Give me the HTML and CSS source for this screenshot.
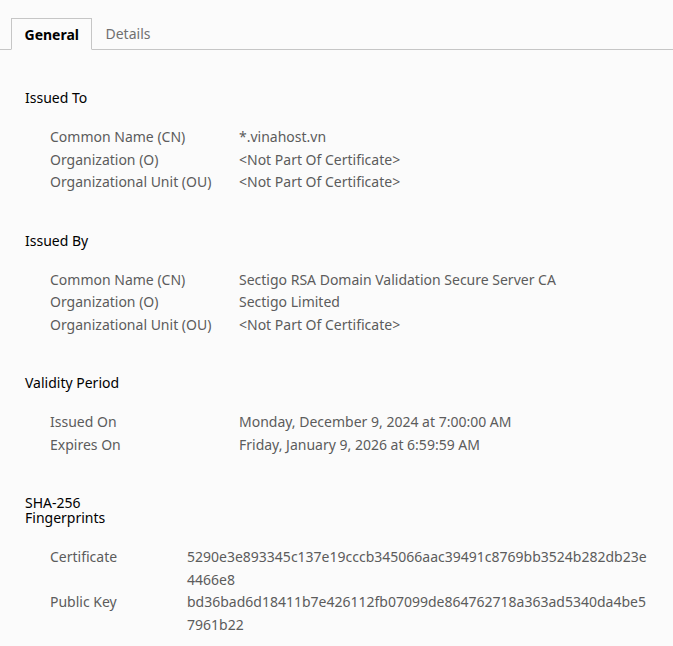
FILE: index.html
```html
<!DOCTYPE html>
<html>
<head>
<meta charset="utf-8">
<link rel="stylesheet" href="styles.css">
</head>
<body>
<div class="tabs">
  <div class="tab active">General</div>
  <div class="tab">Details</div>
</div>
<div class="content">
  <section class="section">
    <h2 class="heading">Issued To</h2>
    <div class="grid">
      <div class="label">Common Name (CN)</div><div class="value">*.vinahost.vn</div>
      <div class="label">Organization (O)</div><div class="value">&lt;Not Part Of Certificate&gt;</div>
      <div class="label">Organizational Unit (OU)</div><div class="value">&lt;Not Part Of Certificate&gt;</div>
    </div>
  </section>
  <section class="section">
    <h2 class="heading">Issued By</h2>
    <div class="grid">
      <div class="label">Common Name (CN)</div><div class="value">Sectigo RSA Domain Validation Secure Server CA</div>
      <div class="label">Organization (O)</div><div class="value">Sectigo Limited</div>
      <div class="label">Organizational Unit (OU)</div><div class="value">&lt;Not Part Of Certificate&gt;</div>
    </div>
  </section>
  <section class="section">
    <h2 class="heading">Validity Period</h2>
    <div class="grid">
      <div class="label">Issued On</div><div class="value">Monday, December 9, 2024 at 7:00:00 AM</div>
      <div class="label">Expires On</div><div class="value">Friday, January 9, 2026 at 6:59:59 AM</div>
    </div>
  </section>
  <section class="section">
    <h2 class="heading narrow">SHA-256 Fingerprints</h2>
    <div class="grid fp">
      <div class="label">Certificate</div><div class="value hash">5290e3e893345c137e19cccb345066aac39491c8769bb3524b282db23e4466e8</div>
      <div class="label">Public Key</div><div class="value hash">bd36bad6d18411b7e426112fb07099de864762718a363ad5340da4be57961b22</div>
    </div>
  </section>
</div>
</body>
</html>
```

FILE: styles.css
```css
html, body {
  margin: 0;
  padding: 0;
  background: #fbfbfb;
}
body {
  font-family: "Noto Sans", "Open Sans", sans-serif;
  font-size: 14px;
  color: #5c5c5c;
  width: 673px;
  height: 646px;
  overflow: hidden;
}
.tabs {
  display: flex;
  padding: 18px 0 0 11px;
  border-bottom: 1px solid #c6c6c6;
  height: 31px;
}
.tab {
  padding: 0 11.5px 0 14px;
  line-height: 31px;
  color: #707070;
}
.tab.active {
  padding: 0 11.5px 0 12.5px;
  color: #000;
  font-weight: bold;
  border: 1px solid #c6c6c6;
  border-bottom: 1px solid #fbfbfb;
  margin-bottom: -1px;
  background: #fbfbfb;
}
.content {
  padding: 40px 0 0 25px;
}
.section {
  margin-bottom: 39px;
}
.heading {
  margin: 0 0 21px;
  font-size: 14px;
  font-weight: normal;
  color: #000;
  line-height: 15px;
}
.heading.narrow {
  width: 90px;
}
.grid {
  display: grid;
  grid-template-columns: 189px 1fr;
  padding-left: 25px;
  line-height: 22.5px;
}
.grid.fp {
  grid-template-columns: 137px 460px;
}
.hash {
  word-break: break-all;
}
```
